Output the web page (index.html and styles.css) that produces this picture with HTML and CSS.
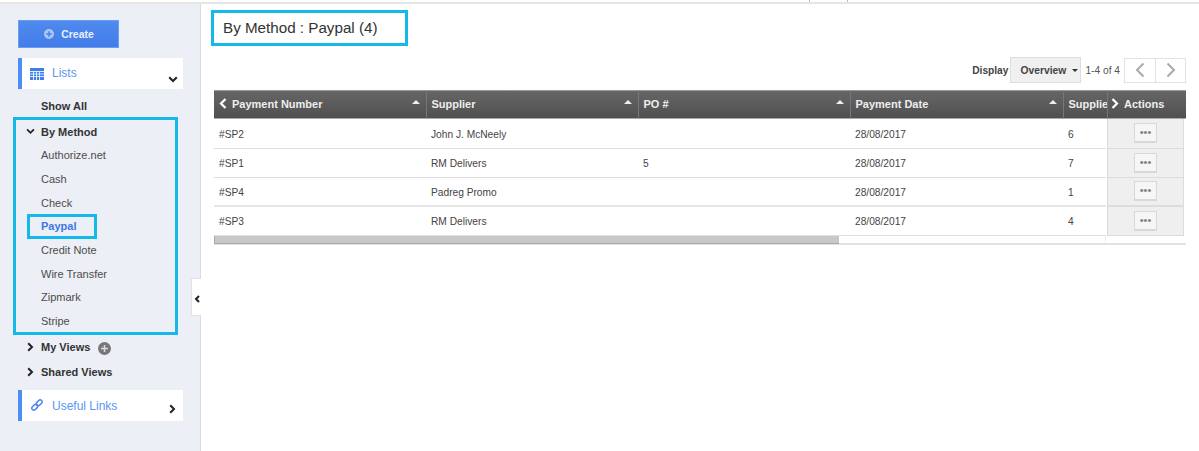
FILE: index.html
```html
<!DOCTYPE html>
<html lang="en">
<head>
<meta charset="utf-8">
<title>By Method : Paypal</title>
<link rel="stylesheet" href="styles.css">
</head>
<body>
<div class="topbar"><span class="topmark"></span></div>
<div class="app">
  <aside class="sidebar">
    <button class="create"><svg class="create-icon" width="10" height="10" viewBox="0 0 11 11"><circle cx="5.5" cy="5.5" r="5.5" fill="#a9c6f7"/><path d="M5.5 2.5v6M2.5 5.5h6" stroke="#4a80e8" stroke-width="1.6"/></svg>Create</button>
    <div class="panel panel-lists">
      <svg class="panel-icon" width="14" height="12" viewBox="0 0 14 12"><rect width="14" height="12" fill="#3f7fe8"/><path d="M0 3.5h14M0 6h14M0 8.500h14M3.500 3v9M6.500 3v9M9.500 3v9" stroke="#fff" stroke-width=".8"/></svg>
      <span class="panel-label">Lists</span>
      <svg class="panel-chev down" width="10" height="7" viewBox="0 0 10 7"><path d="M1.200 1.200 5 5l3.800-3.800" fill="none" stroke="#222" stroke-width="2"/></svg>
    </div>
    <div class="item strong show-all">Show All</div>
    <div class="method-box">
      <div class="item strong head"><svg class="chev" width="9" height="7" viewBox="0 0 10 7"><path d="M1.200 1.200 5 5l3.800-3.800" fill="none" stroke="#222" stroke-width="2"/></svg>By Method</div>
      <div class="item">Authorize.net</div>
      <div class="item">Cash</div>
      <div class="item">Check</div>
      <div class="item active"><span class="active-box">Paypal</span></div>
      <div class="item">Credit Note</div>
      <div class="item">Wire Transfer</div>
      <div class="item">Zipmark</div>
      <div class="item">Stripe</div>
    </div>
    <div class="item strong head myviews"><svg class="chev" width="9" height="10" viewBox="0 0 7 10"><path d="M1.200 1.200 5 5 1.200 8.800" fill="none" stroke="#222" stroke-width="2"/></svg>My Views<svg class="plus" width="13" height="13" viewBox="0 0 13 13"><circle cx="6.500" cy="6.500" r="6.500" fill="#777"/><path d="M6.500 3v7M3 6.500h7" stroke="#ddd" stroke-width="1.500"/></svg></div>
    <div class="item strong head shared"><svg class="chev" width="9" height="10" viewBox="0 0 7 10"><path d="M1.200 1.200 5 5 1.200 8.800" fill="none" stroke="#222" stroke-width="2"/></svg>Shared Views</div>
    <div class="panel panel-links">
      <svg class="panel-icon" width="14" height="14" viewBox="0 0 14 14"><g fill="none" stroke="#4a86ee" stroke-width="1.500"><rect x="-3.200" y="-2" width="6.400" height="4" rx="2" transform="translate(9.300 4.700) rotate(-45)"/><rect x="-3.200" y="-2" width="6.400" height="4" rx="2" transform="translate(4.700 9.300) rotate(-45)"/></g></svg>
      <span class="panel-label">Useful Links</span>
      <svg class="panel-chev right" width="7" height="10" viewBox="0 0 7 10"><path d="M1.200 1.200 5 5 1.200 8.800" fill="none" stroke="#222" stroke-width="2"/></svg>
    </div>
    <div class="collapse"><svg width="6" height="8" viewBox="0 0 6 8"><path d="M5 1 2 4l3 3" fill="none" stroke="#222" stroke-width="2"/></svg></div>
  </aside>
  <main class="content">
    <h1 class="title">By Method : Paypal (4)</h1>
    <div class="toolbar">
      <span class="display">Display</span>
      <span class="select">Overview<i class="caret"></i></span>
      <span class="count">1-4 of 4</span>
      <span class="pager">
        <span class="page"><svg width="10" height="16" viewBox="0 0 10 16"><path d="M8.500 1.500 2 8l6.500 6.500" fill="none" stroke="#aaa" stroke-width="2"/></svg></span>
        <span class="page"><svg width="10" height="16" viewBox="0 0 10 16"><path d="M1.500 1.500 8 8l-6.500 6.500" fill="none" stroke="#aaa" stroke-width="2"/></svg></span>
      </span>
    </div>
    <div class="grid">
      <div class="cell th first"><svg class="th-chev" width="8" height="11" viewBox="0 0 8 11"><path d="M6.500 1 2 5.500 6.500 10" fill="none" stroke="#fff" stroke-width="2.200"/></svg>Payment Number<i class="sort"></i></div>
      <div class="cell th">Supplier<i class="sort"></i></div>
      <div class="cell th">PO #<i class="sort"></i></div>
      <div class="cell th">Payment Date<i class="sort"></i></div>
      <div class="cell th">Supplie</div>
      <div class="cell th act"><svg class="th-chev" width="8" height="11" viewBox="0 0 8 11"><path d="M1.500 1 6 5.500 1.500 10" fill="none" stroke="#fff" stroke-width="2.200"/></svg>Actions</div>

      <div class="cell">#SP2</div><div class="cell">John J. McNeely</div><div class="cell"></div><div class="cell">28/08/2017</div><div class="cell">6</div>
      <div class="cell tool"><span class="more">•••</span></div>

      <div class="cell">#SP1</div><div class="cell">RM Delivers</div><div class="cell">5</div><div class="cell">28/08/2017</div><div class="cell">7</div>
      <div class="cell tool"><span class="more">•••</span></div>

      <div class="cell thick">#SP4</div><div class="cell thick">Padreg Promo</div><div class="cell thick"></div><div class="cell thick">28/08/2017</div><div class="cell thick">1</div>
      <div class="cell tool thick"><span class="more">•••</span></div>

      <div class="cell">#SP3</div><div class="cell">RM Delivers</div><div class="cell"></div><div class="cell">28/08/2017</div><div class="cell">4</div>
      <div class="cell tool"><span class="more">•••</span></div>
    </div>
    <div class="scroll"><div class="track"><div class="thumb"></div></div></div>
  </main>
</div>
</body>
</html>
```
FILE: styles.css
```css
* { box-sizing: border-box; }
html, body { margin: 0; height: 451px; overflow: hidden; }
body { background: #fff; font-family: "Liberation Sans", Arial, sans-serif; font-size: 11px; color: #444; }

.topbar { height: 4px; background: #fff; border-bottom: 2px solid #e6e6e6; position: relative; }
.topmark { position: absolute; left: 809px; top: 0; width: 39px; height: 2px; border-left: 1px solid #bbb; border-right: 1px solid #bbb; }

.app { display: flex; height: 447px; }

.sidebar { position: relative; width: 201px; flex: none; background: #eceff5; border-right: 1px solid #dcdcdc; padding: 16px 0 0 18px; }
.create { display: flex; align-items: center; justify-content: center; gap: 7px; width: 101px; height: 28px; padding: 0 0 0 1px; border: 1px solid #6d9df0; background: linear-gradient(#4f8aef, #437ce8); color: #e8f0ff; font: bold 10.500px "Liberation Sans", Arial, sans-serif; }

.panel { position: relative; display: flex; align-items: center; width: 165px; height: 31px; background: #fff; border-left: 4px solid #4e8cf8; color: #5a96f2; font-size: 12px; }
.panel-lists { margin-top: 10px; }
.panel-links { margin-top: 5px; }
.panel-icon { margin-left: 8px; }
.panel-label { position: absolute; left: 30px; top: 8px; }
.panel-links .panel-label { top: 9px; }
.panel-chev { position: absolute; }
.panel-chev.down { right: 5px; top: 18px; }
.panel-chev.right { right: 7px; top: 14px; }

.item { display: flex; align-items: center; height: 23.700px; padding-left: 23px; color: #4c4c4c; font-size: 11px; }
.strong { font-weight: bold; color: #333; }
.show-all { margin-top: 5px; }

.method-box { width: 165px; height: 218px; margin: -1px 0 0 -5px; border: 3px solid #14b9ea; padding-top: 0; }
.method-box .item { padding-left: 25px; }
.method-box .head { padding-left: 10px; }
.chev { margin-right: 6px; flex: none; }
.head { padding-left: 8px; }
.myviews { height: 25px; }
.shared { height: 25px; }
.plus { margin-left: 8px; margin-top: 2px; }
.active { color: #3a78e8; font-weight: bold; }
.method-box .active { padding-left: 11px; }
.active-box { display: flex; align-items: center; width: 70px; height: 25px; padding-left: 11px; border: 3px solid #14b9ea; }

.collapse { position: absolute; left: 191px; top: 274px; width: 10px; height: 38px; padding-top: 4px; background: #fff; border: 1px solid #e2e2e2; border-right: 0; display: flex; align-items: center; justify-content: center; }

.content { flex: 1; padding: 6px 13px 0 13px; }
.title { display: flex; align-items: center; width: 197px; height: 36px; margin: 0 0 0 -3px; padding: 0 0 2px 9px; border: 3px solid #14b9ea; font-weight: normal; font-size: 15.200px; color: #333; }

.toolbar { display: flex; align-items: center; justify-content: flex-end; height: 26px; margin-top: 11px; }
.display { font-weight: bold; color: #444; font-size: 10.200px; margin-right: 2px; }
.select { display: flex; align-items: center; width: 71px; height: 26px; padding-left: 9px; background: #f0f0f0; border: 1px solid #ddd; font-weight: bold; font-size: 10.300px; color: #444; }
.caret { margin-left: 6px; border: 3px solid transparent; border-top: 3px solid #333; border-bottom: 0; }
.count { margin: 0 4px; font-size: 10.200px; color: #555; }
.pager { display: flex; width: 62px; height: 25px; border: 1px solid #e2e2e2; }
.page { display: flex; align-items: center; justify-content: center; width: 30px; }
.page + .page { border-left: 1px solid #e2e2e2; }

.grid { display: grid; grid-template-columns: 212px 212px 212px 213px 44px 79px; grid-template-rows: 29px 30px 29px 29px 29px; margin-top: 7px; }
.cell { display: flex; align-items: center; padding: 1px 0 0 5px; border-bottom: 1px solid #dedede; font-size: 10.200px; color: #444; overflow: hidden; white-space: nowrap; }
.thick { border-bottom: 2px solid #e6e6e6; }
.th { position: relative; height: 29px; padding: 0 0 2px 4.500px; background: linear-gradient(#666, #505050); border-top: 1px solid #999; border-bottom: 1px solid #aaa; border-left: 1px solid #777; color: #eee; font-weight: bold; font-size: 11px; }
.th.first { padding-left: 5px; border-left: 0; }
.th-chev { margin-right: 5px; flex: none; }
.sort { position: absolute; right: 6px; top: 9px; border: 4px solid transparent; border-top: 0; border-bottom: 4px solid #eee; }
.act { padding-left: 3px; }
.tool { justify-content: center; padding: 0; background: #efefef; border: 1px solid #dcdcdc; border-top: 0; margin-right: 2px; box-shadow: -1px 0 0 #fff; }
.tool.thick { border-bottom: 2px solid #dcdcdc; }
.more { display: flex; align-items: center; justify-content: center; width: 23px; height: 20px; margin-top: -1px; background: #f6f6f6; border: 1px solid #d8d8d8; border-bottom-width: 2px; color: #808080; font-size: 11px; line-height: 1; }

.scroll { width: 972px; height: 10px; margin-top: -1px; border-bottom: 2px solid #e2e2e2; }
.track { width: 892px; height: 8px; border-right: 1px solid #eee; }
.thumb { width: 625px; height: 9px; background: #c8c8c8; border: 1px solid #aaa; border-right: 0; }
```
